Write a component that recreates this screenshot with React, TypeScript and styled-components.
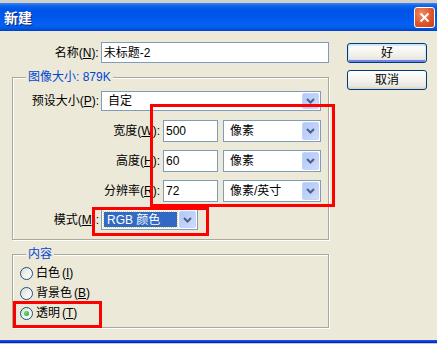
import styled, { createGlobalStyle } from 'styled-components'

const GlobalStyle = createGlobalStyle`
    *{
        margin: 0px;
        padding: 0px;
        box-sizing: border-box;
    }
    body{
        width: 437px;
        height: 344px;
        overflow: hidden;
        background: #ECE9D8;
        font-family: "Liberation Sans", "Noto Sans CJK SC", sans-serif;
        font-size: 12px;
        color: #000;
    }
`

const Window = styled.div`
    position: relative;
    width: 437px;
    height: 344px;
    display: flex;
    flex-direction: column;
    background: #ECE9D8;
`

const TopStrip = styled.div`
    height: 3px;
    background: #D4D0C8;
`

const TitleBar = styled.div`
    height: 28px;
    display: flex;
    align-items: center;
    justify-content: space-between;
    padding: 0 2px 0 4px;
    background: linear-gradient(#3B86F2 0px, #0C61EC 3px, #0055E6 7px, #0057EC 15px, #0462F4 22px, #0053E0 26px, #0040BF 28px);
`

const Title = styled.span`
    font-family: "Noto Sans CJK SC", sans-serif;
    font-weight: 700;
    font-size: 14px;
    line-height: 16px;
    color: #fff;
    text-shadow: 1px 1px 0 #0A1E7A;
`

const CloseButton = styled.div`
    width: 21px;
    height: 21px;
    border: 1px solid #fff;
    border-radius: 3px;
    background: radial-gradient(circle at 35% 30%, #F08A62 0%, #E0552A 55%, #C7401A 100%);
    display: flex;
    align-items: center;
    justify-content: center;
`

const Body = styled.div`
    flex: 1;
    display: flex;
    align-items: flex-start;
`

const LeftCol = styled.div`
    width: 329px;
    padding: 11px 0 0 12px;
    display: flex;
    flex-direction: column;
`

const RightCol = styled.div`
    margin-left: 18px;
    padding-top: 12px;
    display: flex;
    flex-direction: column;
    gap: 7px;
`

const BottomFrame = styled.div`
    height: 4px;
    background: linear-gradient(#1A5BE8 0px, #0831D9 2px, #001EA0 3px, #C8C8C8 3px);
`

const Row = styled.div<{ $mt?: number; $h?: number }>`
    display: flex;
    align-items: center;
    height: ${p => p.$h ?? 22}px;
    margin-top: ${p => p.$mt ?? 0}px;
`

const Label = styled.span<{ $w: number; $gap?: number }>`
    width: ${p => p.$w}px;
    margin-right: ${p => p.$gap ?? 2}px;
    text-align: right;
    white-space: nowrap;
    line-height: 14px;
    u{
        text-decoration: underline;
    }
`

const TextBox = styled.div<{ $w: number }>`
    width: ${p => p.$w}px;
    height: 100%;
    border: 1px solid #7F9DB9;
    background: #fff;
    padding-left: 2px;
    display: flex;
    align-items: center;
    line-height: 14px;
`

const Select = styled.div<{ $w: number; $ml?: number }>`
    width: ${p => p.$w}px;
    height: 100%;
    margin-left: ${p => p.$ml ?? 0}px;
    border: 1px solid #7F9DB9;
    background: #fff;
    display: flex;
    align-items: stretch;
    padding: 1px;
`

const SelectText = styled.span<{ $active?: boolean }>`
    flex: 1;
    display: flex;
    align-items: center;
    line-height: 14px;
    padding-left: ${p => (p.$active ? 3 : 5)}px;
    margin: ${p => (p.$active ? '1px 2px 1px 1px' : '0')};
    background: ${p => (p.$active ? '#316AC5' : 'transparent')};
    color: ${p => (p.$active ? '#fff' : '#000')};
    outline: ${p => (p.$active ? '1px dotted #E8D080' : 'none')};
`

const DropButton = styled.span`
    width: 17px;
    border: 1px solid #C3D3FD;
    border-radius: 2px;
    background: linear-gradient(135deg, #B4C8F6 0%, #C1D3FB 60%, #D2DEFB 100%);
    display: flex;
    align-items: center;
    justify-content: center;
`

const Group = styled.div<{ $pad: string; $mt: number }>`
    position: relative;
    width: 317px;
    margin-top: ${p => p.$mt}px;
    padding: ${p => p.$pad};
    border: 1px solid #ACA899;
    box-shadow: 1px 1px 0 #fff, inset 1px 1px 0 #fff;
    display: flex;
    flex-direction: column;
`

const Legend = styled.span`
    position: absolute;
    top: -8px;
    left: 13px;
    padding: 0 2px;
    line-height: 14px;
    background: #ECE9D8;
    color: #0046D5;
`

const Button = styled.div<{ $default?: boolean }>`
    width: 80px;
    height: 20px;
    border: 1px solid #003C74;
    border-radius: 3px;
    background: linear-gradient(#FFFFFF 0%, #F4F3EE 50%, #E8E6DD 85%, #D6D0C5 100%);
    box-shadow: ${p => (p.$default ? 'inset 0 1px 0 1px #CEE7FF, inset 0 -1px 0 1px #6982EE' : 'none')};
    display: flex;
    align-items: center;
    justify-content: center;
    line-height: 14px;
`

const RadioRow = styled.div`
    height: 20px;
    display: flex;
    align-items: center;
    gap: 3px;
    line-height: 14px;
`

const RadioCircle = styled.span<{ $checked?: boolean }>`
    width: 13px;
    height: 13px;
    border-radius: 50%;
    border: 1px solid #1C5180;
    background: linear-gradient(135deg, #DCDCD7 0%, #F4F4F0 60%, #fff 100%);
    display: flex;
    align-items: center;
    justify-content: center;
    &::after{
        content: '';
        display: ${p => (p.$checked ? 'block' : 'none')};
        width: 5px;
        height: 5px;
        border-radius: 50%;
        background: radial-gradient(circle at 35% 35%, #6FE06F, #21A121);
    }
`

const Hotkey = styled.span`
    margin-left: 2px;
    font-size: 12px;
`

const Marker = styled.div<{ $x: number; $y: number; $w: number; $h: number }>`
    position: absolute;
    left: ${p => p.$x}px;
    top: ${p => p.$y}px;
    width: ${p => p.$w}px;
    height: ${p => p.$h}px;
    border: 3px solid #FF0000;
    pointer-events: none;
`

const Chevron = () => (
    <svg width="9" height="6" viewBox="0 0 9 6">
        <path d="M1 1 L4.5 4.5 L8 1" fill="none" stroke="#4D6185" strokeWidth="2" />
    </svg>
)

const DropDown = ({ w, text, ml, active }: { w: number; text: string; ml?: number; active?: boolean }) => (
    <Select $w={w} $ml={ml}>
        <SelectText $active={active}>{text}</SelectText>
        <DropButton><Chevron /></DropButton>
    </Select>
)

const sizeRows = [
    { label: '宽度', key: 'W', value: '500', unit: '像素', mt: 9 },
    { label: '高度', key: 'H', value: '60', unit: '像素', mt: 8 },
    { label: '分辨率', key: 'R', value: '72', unit: '像素/英寸', mt: 8 },
]

const radios = [
    { label: '白色', key: 'I', checked: false },
    { label: '背景色', key: 'B', checked: false },
    { label: '透明', key: 'T', checked: true },
]

const App = () => {
    return (
        <>
            <GlobalStyle />
            <Window>
                <TopStrip />
                <TitleBar>
                    <Title>新建</Title>
                    <CloseButton>
                        <svg width="11" height="11" viewBox="0 0 11 11">
                            <path d="M1.5 1.5 L9.5 9.5 M9.5 1.5 L1.5 9.5" stroke="#fff" strokeWidth="2" />
                        </svg>
                    </CloseButton>
                </TitleBar>
                <Body>
                    <LeftCol>
                        <Row $h={21}>
                            <Label $w={87}>名称(<u>N</u>):</Label>
                            <TextBox $w={229}>未标题-2</TextBox>
                        </Row>
                        <Group $mt={14} $pad="13px 0 9px 0">
                            <Legend>图像大小: 879K</Legend>
                            <Row $h={20}>
                                <Label $w={86}>预设大小(<u>P</u>):</Label>
                                <DropDown w={220} text="自定" />
                            </Row>
                            {sizeRows.map(r => (
                                <Row key={r.key} $mt={r.mt}>
                                    <Label $w={147} $gap={3}>{r.label}(<u>{r.key}</u>):</Label>
                                    <TextBox $w={55}>{r.value}</TextBox>
                                    <DropDown w={98} ml={5} text={r.unit} />
                                </Row>
                            ))}
                            <Row $h={21} $mt={7}>
                                <Label $w={86}>模式(<u>M</u>):</Label>
                                <DropDown w={97} text="RGB 颜色" active />
                            </Row>
                        </Group>
                        <Group $mt={14} $pad="8px 0 4px 7px">
                            <Legend>内容</Legend>
                            {radios.map(r => (
                                <RadioRow key={r.key}>
                                    <RadioCircle $checked={r.checked} />
                                    <span>{r.label}<Hotkey>(<u>{r.key}</u>)</Hotkey></span>
                                </RadioRow>
                            ))}
                        </Group>
                    </LeftCol>
                    <RightCol>
                        <Button $default>好</Button>
                        <Button>取消</Button>
                    </RightCol>
                </Body>
                <BottomFrame />
                <Marker $x={150} $y={104} $w={185} $h={103} />
                <Marker $x={92} $y={207} $w={117} $h={29} />
                <Marker $x={13} $y={301} $w={89} $h={27} />
            </Window>
        </>
    )
}

export default App
